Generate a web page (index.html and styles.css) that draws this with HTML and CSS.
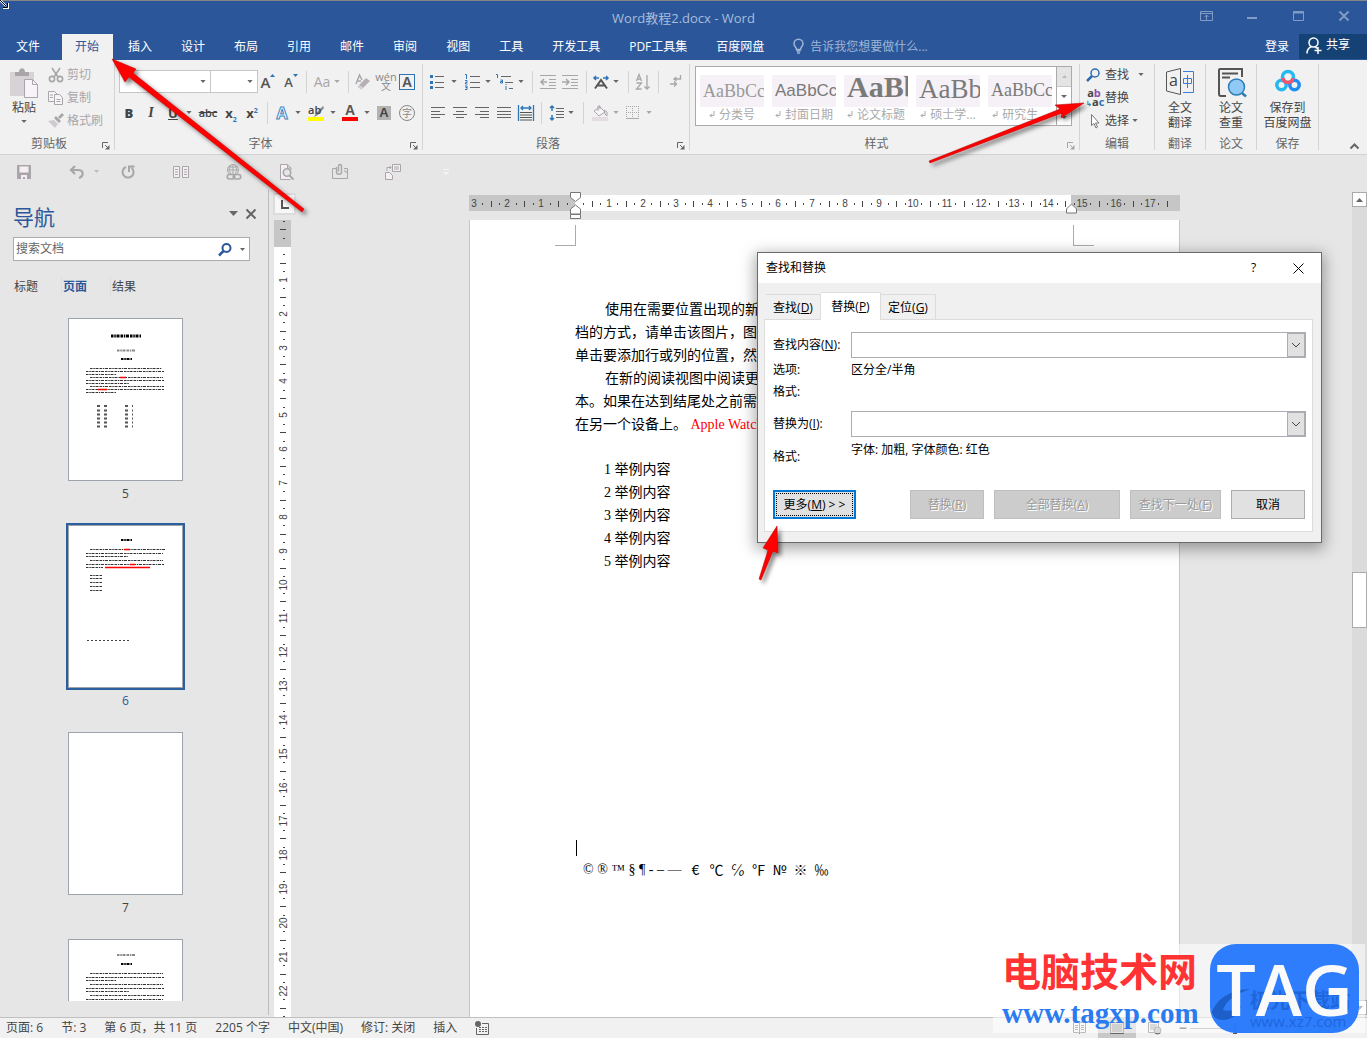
FILE: index.html
```html
<!DOCTYPE html>
<html lang="zh-CN">
<head>
<meta charset="utf-8">
<title>Word教程2.docx - Word</title>
<link rel="stylesheet" href="styles.css">
</head>
<body>
<svg class="defs" aria-hidden="true">
  <symbol id="down" viewBox="0 0 7 4"><path d="M0 0h7L3.500 4z" fill="currentColor"/></symbol>
  <symbol id="launch" viewBox="0 0 8 8"><path d="M.5 6V.5H6M3 3l3 3" fill="none" stroke="currentColor"/><path d="M7.500 3v4.500H3z" fill="currentColor"/></symbol>
  <symbol id="lines" viewBox="0 0 14 12"><path d="M0 1h14M0 4.500h14M0 7.500h14M0 11h14" stroke="currentColor"/></symbol>
  <symbol id="ret" viewBox="0 0 6 7"><path d="M5 0v4.500H1M3 2.500l-2 2 2 2" fill="none" stroke="#aaa"/></symbol>
</svg>

<header class="top">
  <div class="titlebar">
    <h1>Word教程2.docx - Word</h1>
    <div class="winbtns">
      <button aria-label="功能区显示选项"><svg width="13" height="10" fill="none" stroke="currentColor"><path d="M.5.5h12v9H.5zM.5 2.500h12M6.500 9V4M4.500 6l2-2 2 2"/></svg></button>
      <button aria-label="最小化"><svg width="10" height="10" stroke="currentColor"><path d="M0 7h10" stroke-width="2"/></svg></button>
      <button aria-label="最大化"><svg width="11" height="10" fill="none" stroke="currentColor"><path d="M.5.5h10v9H.5z"/><path d="M0 1.500h11" stroke-width="2"/></svg></button>
      <button aria-label="关闭"><svg width="10" height="10" stroke="currentColor"><path d="M.5.5l9 9M9.500.5l-9 9" stroke-width="2"/></svg></button>
    </div>
  </div>
  <nav class="tabs">
    <button class="file">文件</button><button class="on">开始</button><button>插入</button><button>设计</button><button>布局</button><button>引用</button><button>邮件</button><button>审阅</button><button>视图</button><button>工具</button><button>开发工具</button><button>PDF工具集</button><button>百度网盘</button>
    <button class="tell"><svg width="11" height="15" fill="none" stroke="currentColor" stroke-width="1.500"><path d="M3.500 10.500C3.500 8 1 7.500 1 4.800a4.300 4.300 0 0 1 9 0c0 2.700-2.500 3.200-2.500 5.700zM3.500 12h4M4 14h3"/></svg>告诉我您想要做什么...</button>
    <button class="login">登录</button>
    <button class="share"><svg width="16" height="17" fill="none" stroke="currentColor" stroke-width="1.500"><circle cx="7.500" cy="5.500" r="4.500"/><path d="M1 16.500c0-4 2-6 4.500-7M9 9.500l2 2M8.500 13.500h7M12 10v7"/></svg>共享</button>
  </nav>
</header>

<section class="ribbon" aria-label="功能区">
  <div class="group g-clip">
    <div class="body clip">
      <button class="paste">
        <svg width="29" height="30"><path d="M0 4h24v24H0z" fill="#d6d2d6"/><path d="M5 4h4c0-5 6-5 6 0h4v4H5z" fill="#a9a6a9"/><path d="M14.500 11.500h8l5 5v13h-13z" fill="#f8f3f8" stroke="#a9a6a9"/><path d="M22.500 11.500v5h5" fill="none" stroke="#a9a6a9"/></svg>
        <span>粘贴</span><svg class="ar"><use href="#down"/></svg>
      </button>
      <div class="stack dim">
        <button><svg width="16" height="16" fill="none" stroke="currentColor" stroke-width="1.600"><path d="M4 1l6 9M12 1L6 10"/><circle cx="4" cy="12" r="2.600"/><circle cx="12" cy="12" r="2.600"/></svg>剪切</button>
        <button><svg width="16" height="16" fill="#f8f3f8" stroke="currentColor"><path d="M.5 1.500h6l3 3v7h-9z"/><path d="M6.500 4.500h5l3 3v7h-8zM2 5h3M2 7.500h3M8.500 9.500h4M8.500 11.500h4"/></svg>复制</button>
        <button><svg width="16" height="16"><path d="M0 8l6-1 4 4-3 4z" fill="#cfcbcf"/><path d="M6 5l5 5 2-2-5-5zM10 4l4-4 2 2-4 4z" fill="currentColor"/></svg>格式刷</button>
      </div>
    </div>
    <div class="cap"><span>剪贴板</span><button class="la" aria-label="剪贴板选项"><svg><use href="#launch"/></svg></button></div>
  </div>

  <div class="group g-font">
    <div class="body">
      <div class="row font1">
        <div class="combo"><input aria-label="字体"><svg class="ar"><use href="#down"/></svg></div>
        <div class="combo size"><input aria-label="字号"><svg class="ar"><use href="#down"/></svg></div>
        <button class="g1" aria-label="增大字号">A<svg width="5" height="3"><path d="M0 3h5L2.500 0z" fill="#2e75b6"/></svg></button>
        <button class="g2" aria-label="减小字号">A<svg width="5" height="3"><path d="M0 0h5L2.500 3z" fill="#2e75b6"/></svg></button>
        <i class="sep"></i>
        <button class="aa dim">Aa<svg class="ar"><use href="#down"/></svg></button>
        <i class="sep"></i>
        <button class="dim" aria-label="清除格式"><svg width="16" height="16"><path d="M1 10L4.500 1 7 6M2.500 7H6" fill="none" stroke="currentColor" stroke-width="1.500"/><path d="M4 11l7-7 4 3-7 7z" fill="#b5b1b5"/><path d="M3 12l4 3" stroke="#ccc" stroke-width="2"/></svg></button>
        <button class="wen dim"><span>wén</span><span>文</span></button>
        <button class="abox">A</button>
      </div>
      <div class="row font2">
        <button><b>B</b></button><button class="it">I</button><button class="un">U</button><svg class="ar"><use href="#down"/></svg>
        <button class="st">abc</button><button class="sub">x<sub>2</sub></button><button class="sub">x<sup>2</sup></button>
        <i class="sep"></i>
        <button class="fx">A</button><svg class="ar"><use href="#down"/></svg>
        <button class="hl" aria-label="突出显示"><span>ab</span><svg width="16" height="16"><path d="M15 1L8 8l-2 4 4-2 6-7z" fill="#8a8a8a"/><path d="M0 12h16v4H0z" fill="#ff0"/></svg></button><svg class="ar"><use href="#down"/></svg>
        <button class="fc">A</button><svg class="ar"><use href="#down"/></svg>
        <button class="sh">A</button>
        <button class="circ dim">字</button>
      </div>
    </div>
    <div class="cap"><span>字体</span><button class="la" aria-label="字体选项"><svg><use href="#launch"/></svg></button></div>
  </div>

  <div class="group g-para">
    <div class="body">
      <div class="row para1">
        <button aria-label="项目符号"><svg width="14" height="15"><path d="M5 2.500h9M5 8.500h9M5 13.500h9" stroke="#666"/><path d="M0 1h3v3H0zM0 7h3v3H0zM0 12h3v3H0z" fill="#2e75b6"/></svg></button><svg class="ar"><use href="#down"/></svg>
        <button aria-label="编号"><svg width="15" height="16"><path d="M5 2.500h10M5 8.500h10M5 13.500h10" stroke="#666"/><path d="M0 .5h1.500V5M0 6.500h2v2H.5V10h2M0 12h2v3.500H0M.5 13.500H2" stroke="#2e75b6" fill="none"/></svg></button><svg class="ar"><use href="#down"/></svg>
        <button aria-label="多级列表"><svg width="18" height="16"><path d="M5 2.500h10M9 8.500h8M13 14.500h4" stroke="#666"/><path d="M0 .5h1.500V4M4.500 6h2v3h-2V7.500h2M10 10v1M10 12v4" stroke="#2e75b6" fill="none"/></svg></button><svg class="ar"><use href="#down"/></svg>
        <i class="sep"></i>
        <button class="dim" aria-label="减少缩进"><svg width="16" height="14" fill="none" stroke="currentColor"><path d="M0 .5h16M9 4.500h7M9 7.500h7M9 10.500h7M0 13.500h16"/><path d="M1 7h6M4 4L1 7l3 3" stroke-width="1.500"/></svg></button>
        <button class="dim" aria-label="增加缩进"><svg width="16" height="14" fill="none" stroke="currentColor"><path d="M0 .5h16M9 4.500h7M9 7.500h7M9 10.500h7M0 13.500h16"/><path d="M0 7h6M4 4l3 3-3 3" stroke-width="1.500"/></svg></button>
        <i class="sep"></i>
        <button aria-label="中文版式"><svg width="16" height="14" fill="none"><path d="M2 13.500L8 5l6 8.500M4.500 10.500h7" stroke="#555" stroke-width="2"/><path d="M1 3h5M3 1L1 3l2 2M15 3h-5M13 1l2 2-2 2" stroke="#2e75b6" stroke-width="1.500"/></svg></button><svg class="ar"><use href="#down"/></svg>
        <i class="sep"></i>
        <button class="dim" aria-label="排序"><svg width="14" height="16" fill="none" stroke="currentColor"><path d="M.5 7L3 .5 5.500 7M1.500 5h3M.5 9h5l-5 6h5" stroke-width="1.300"/><path d="M11 1v14M8.500 12.500L11 15l2.500-2.500" stroke-width="1.300"/></svg></button>
        <i class="sep"></i>
        <button class="dim" aria-label="显示编辑标记"><svg width="12" height="13" fill="none" stroke="currentColor" stroke-width="1.300"><path d="M10.500 0v4H4M6.500 2L4 4l2.500 2M0 9h6M4 6.500L6.500 9 4 11.500"/></svg></button>
      </div>
      <div class="row para2">
        <button aria-label="左对齐"><svg width="14" height="12" stroke="#666"><path d="M0 .5h14M0 4.500h9M0 7.500h14M0 10.500h9"/></svg></button>
        <button aria-label="居中"><svg width="14" height="12" stroke="#666"><path d="M0 .5h14M3 4.500h8M0 7.500h14M3 10.500h8"/></svg></button>
        <button aria-label="右对齐"><svg width="14" height="12" stroke="#666"><path d="M0 .5h14M5 4.500h9M0 7.500h14M5 10.500h9"/></svg></button>
        <button aria-label="两端对齐"><svg width="14" height="12" stroke="#666"><path d="M0 .5h14M0 4.500h14M0 7.500h14M0 10.500h14"/></svg></button>
        <button aria-label="分散对齐"><svg width="16" height="16" fill="none"><path d="M.5 0v16M15.500 0v16M3 3h10M5 1L3 3l2 2M11 1l2 2-2 2" stroke="#2e75b6" stroke-width="1.300"/><path d="M2 7.500h12M2 10h12M2 12.500h12M2 15h12" stroke="#555"/></svg></button>
        <i class="sep"></i>
        <button aria-label="行距"><svg width="15" height="16" fill="none"><path d="M3 1v5M1 3l2-2 2 2M3 10v5M1 13l2 2 2-2" stroke="#2e75b6" stroke-width="1.500"/><path d="M7 3.500h8M7 6.500h8M7 9.500h8M7 12.500h8" stroke="#666"/></svg></button><svg class="ar"><use href="#down"/></svg>
        <i class="sep"></i>
        <button class="dim" aria-label="底纹"><svg width="16" height="16"><path d="M2 6l6-4 5 5-6 4z" fill="#f8f3f8" stroke="currentColor"/><path d="M6 6V1h2v3M12 5l3 2v4l-2-2z" fill="none" stroke="currentColor"/><path d="M0 12h16v4H0z" fill="#e3dde3"/></svg></button><svg class="ar dim"><use href="#down"/></svg>
        <button class="dim" aria-label="边框"><svg width="13" height="13" fill="none" stroke="currentColor"><path d="M.5 0v11M6.500 0v11M12.500 0v11M0 .5h13M0 6.500h13" stroke-dasharray="1 1"/><path d="M0 12.500h13"/></svg></button><svg class="ar dim"><use href="#down"/></svg>
      </div>
    </div>
    <div class="cap"><span>段落</span><button class="la" aria-label="段落选项"><svg><use href="#launch"/></svg></button></div>
  </div>

  <div class="group g-style">
    <div class="body">
      <div class="gallery">
        <div class="items">
          <button><span class="sw s1">AaBbCc</span><span class="nm"><svg width="6" height="7"><use href="#ret"/></svg>分类号</span></button>
          <button><span class="sw s2">AaBbCc</span><span class="nm"><svg width="6" height="7"><use href="#ret"/></svg>封面日期</span></button>
          <button><span class="sw s3">AaBb</span><span class="nm"><svg width="6" height="7"><use href="#ret"/></svg>论文标题</span></button>
          <button><span class="sw s4">AaBb</span><span class="nm"><svg width="6" height="7"><use href="#ret"/></svg>硕士学...</span></button>
          <button><span class="sw s5">AaBbCc</span><span class="nm"><svg width="6" height="7"><use href="#ret"/></svg>研究生...</span></button>
        </div>
        <div class="gs"><button class="off" aria-label="上一行"><svg width="5" height="3"><path d="M0 3h5L2.500 0z" fill="#bbb"/></svg></button><button aria-label="下一行"><svg width="6" height="3"><path d="M0 0h6L3 3z" fill="#666"/></svg></button><button aria-label="其他"><svg width="6" height="6"><path d="M0 .5h6" stroke="#666"/><path d="M0 3h6L3 6z" fill="#666"/></svg></button></div>
      </div>
    </div>
    <div class="cap"><span>样式</span><button class="la dim" aria-label="样式选项"><svg><use href="#launch"/></svg></button></div>
  </div>

  <div class="group g-edit">
    <div class="body stack">
      <button><svg width="16" height="14" fill="none" stroke="#2e6cb0"><circle cx="9" cy="5" r="4" stroke-width="1.500"/><path d="M6 8l-5 5" stroke-width="2.500"/></svg>查找<svg class="ar wide"><use href="#down"/></svg></button>
      <button><span class="rep"><span>a<em>b</em></span><span><u>↳</u>a<s>c</s></span></span>替换</button>
      <button><svg width="16" height="16"><path d="M5.500 1.500v11l2.500-2 2 4.500 1.500-1-2-4h3.500z" fill="#fff" stroke="#777"/></svg>选择<svg class="ar"><use href="#down"/></svg></button>
    </div>
    <div class="cap"><span>编辑</span></div>
  </div>
  <div class="group g-one">
    <div class="body"><button class="big"><svg width="29" height="30" fill="none"><path d="M.5 5L14.500 1.500v26L.5 24z" stroke="#555"/><path d="M17 4.500h10.500v21H17" stroke="#3b7dd8"/><path d="M17.500 11.500h8v5h-8zM21.500 8v13" stroke="#3b7dd8"/><text x="3" y="19" class="ia">a</text></svg><span>全文<br>翻译</span></button></div>
    <div class="cap"><span>翻译</span></div>
  </div>
  <div class="group g-one">
    <div class="body"><button class="big"><svg width="29" height="30" fill="none"><path d="M25 10V2H3a1 1 0 0 0-1 1v24a2 2 0 0 0 2 2h5" stroke="#555" stroke-width="2"/><path d="M5 6.500h16M5 10.500h8" stroke="#555" stroke-width="2"/><circle cx="19.500" cy="20" r="8" fill="#90c8f6" stroke="#2c7db5" stroke-width="1.500"/><path d="M25 26l4 3.500" stroke="#2c7db5" stroke-width="2.500"/></svg><span>论文<br>查重</span></button></div>
    <div class="cap"><span>论文</span></div>
  </div>
  <div class="group g-save">
    <div class="body"><button class="big"><svg width="26" height="30" fill="none" stroke-width="3.500"><circle cx="13" cy="10" r="5.500" stroke="#25b9f0"/><circle cx="6.500" cy="18" r="4.700" stroke="#25b9f0"/><circle cx="19.500" cy="18" r="4.700" stroke="#1f8df5"/><path d="M8 11c1 6 9 6 10 0" stroke="#f0566e"/></svg><span>保存到<br>百度网盘</span></button></div>
    <div class="cap"><span>保存</span></div>
  </div>
  <button class="collapse" aria-label="折叠功能区"><svg width="9" height="6" fill="none" stroke="#666" stroke-width="2"><path d="M.5 5.500l4-4 4 4"/></svg></button>
</section>

<div class="qat">
  <button aria-label="保存"><svg width="14" height="14"><path d="M0 0h14v14H0z" fill="#a9a6a9"/><path d="M2.500 1.500h9v6h-9zM4 10h6v4H8v-2H6v2H4z" fill="#f5eff5"/></svg></button>
  <button class="undo" aria-label="撤消"><svg width="15" height="14" fill="none" stroke="currentColor" stroke-width="2.200"><path d="M6 1L2 5l4 4M2 5h7c6 0 6 6 1 8"/></svg><svg class="ar"><use href="#down"/></svg></button>
  <button aria-label="重复"><svg width="14" height="14" fill="none" stroke="currentColor" stroke-width="2"><path d="M5 2a5.500 5.500 0 1 0 5.500.8M8 7V1.500h5.500"/></svg></button>
  <button aria-label="双页"><svg width="16" height="12" fill="#f5eff5" stroke="currentColor"><path d="M.5.5h6v11h-6zM9.500.5h6v11h-6zM2 3.500h3M2 6h3M2 8.500h3M11 3.500h3M11 6h3M11 8.500h3"/></svg></button>
  <button aria-label="超链接"><svg width="16" height="16" fill="none" stroke="currentColor"><circle cx="7" cy="6" r="5.500"/><path d="M1.500 6h11M2 3h10M7 .5v10M5 1c-2 4-2 6 0 9M9 1c2 4 2 6 0 9"/><path d="M3.500 10.500h3a2 2 0 0 1 0 4.500h-3a2 2 0 0 1 0-4.500zM9.500 10.500h3a2 2 0 0 1 0 4.500h-3a2 2 0 0 1 0-4.500z" fill="#e6e6e6" stroke-width="1.600"/></svg></button>
  <button aria-label="打印预览"><svg width="14" height="16" fill="none" stroke="currentColor"><path d="M10.500 15.500H.5V.5h7l3.500 3.500v2M7.500.5V4H11" fill="#f5eff5"/><circle cx="7" cy="8.500" r="3.700" fill="#e6e6e6" stroke-width="1.600"/><path d="M9.500 11.500l4 4" stroke-width="2"/></svg></button>
  <button aria-label="邮件附件"><svg width="16" height="15" fill="none" stroke="currentColor"><path d="M4 4.500H.5v10h15v-10H12M12 7h2v2"/><path d="M4.500 3v5c0 3 5 3 5 0V2c0-2-3-2-3 0v5.500" stroke-width="1.400"/></svg></button>
  <button aria-label="切换窗口"><svg width="16" height="16" fill="#f5eff5" stroke="currentColor"><path d="M7.500.5h8v7h-8zM.5 8.500h4l3 3v4h-7zM9 3h5M9 5h5M2 7V3.500h4M4.500 2L6 3.500 4.500 5"/></svg></button>
  <button class="more" aria-label="自定义"><svg width="6" height="6"><path d="M0 .5h6" stroke="#f6f6f6"/><path d="M0 3h6L3 6z" fill="#f6f6f6"/></svg></button>
</div>

<main class="work">
  <aside class="navpane">
    <div class="navhead"><h2>导航</h2><button aria-label="任务窗格选项"><svg width="9" height="5"><path d="M0 0h9L4.500 5z" fill="#666"/></svg></button><button aria-label="关闭"><svg width="10" height="10" stroke="#666" stroke-width="2"><path d="M.5.5l9 9M9.500.5l-9 9"/></svg></button></div>
    <div class="search"><input aria-label="搜索文档" placeholder="搜索文档"><svg width="14" height="13" fill="none" stroke="#2b579a"><circle cx="8.500" cy="5" r="4" stroke-width="2"/><path d="M5.500 8L1 12.500" stroke-width="2.500"/></svg><svg class="ar"><use href="#down"/></svg></div>
    <div class="navtabs"><button>标题</button><button class="on">页面</button><button>结果</button></div>
    <ol class="thumbs">
      <li><svg class="th" viewBox="0 0 113 161"><g stroke="#333" stroke-dasharray="2.500 .8 1.500 .7 3 1"><path d="M42 17h30" stroke="#000" stroke-width="3"/><path d="M48 31.500h18" stroke="#888" stroke-width="2"/><path d="M52 40h11" stroke="#000" stroke-width="2"/><path d="M21 49.500h72M17 52.500h78M17 55.500h30M21 58.500h73M17 61.500h78M17 64.500h43M21 67.500h74M17 70.500h78M17 73.500h30"/></g><path d="M51 58.500h6M29 70.500h9" stroke="red" stroke-width="1.500"/><path d="M28 87h12M56 87h8M28 91.500h12M56 91.500h8M28 95.500h12M56 95.500h8M28 99.500h12M56 99.500h8M28 103.500h12M56 103.500h8M28 107.500h12M56 107.500h8" stroke="#555" stroke-width="2" stroke-dasharray="3 4"/></svg><span>5</span></li>
      <li class="on"><svg class="th" viewBox="0 0 113 161"><g stroke="#333" stroke-dasharray="2.500 .8 1.500 .7 3 1"><path d="M52 14h11" stroke="#000" stroke-width="2"/><path d="M21 23.500h75M17 27.500h77M17 30.500h42M21 34.500h73M17 38.500h78M17 41.500h17"/><path d="M21 49.500h12M21 52.500h12M21 56.500h12M21 60.500h12M21 64.500h12"/></g><path d="M18 114.500h42" stroke="#444" stroke-dasharray="2 2"/><path d="M55 23.500h6M61 38.500h5M36 41.500h45" stroke="red" stroke-width="1.500"/></svg><span>6</span></li>
      <li><svg class="th" viewBox="0 0 113 161"></svg><span>7</span></li>
      <li><svg class="th" viewBox="0 0 113 161"><g stroke="#333" stroke-dasharray="2.500 .8 1.500 .7 3 1"><path d="M48 15h18" stroke="#888" stroke-width="2"/><path d="M52 24h11" stroke="#000" stroke-width="2"/><path d="M21 33.500h73M17 37.500h78M17 40.500h30M21 44.500h73M17 48.500h78M17 51.500h43M21 55.500h74M17 59.500h77M17 62.500h60"/></g></svg></li>
    </ol>
  </aside>

  <div class="vcol">
    <button class="tabstop" aria-label="制表符"><svg width="8" height="9" fill="none" stroke="#555" stroke-width="2"><path d="M1 0v8h7"/></svg></button>
    <svg class="vruler" id="vruler"></svg>
  </div>

  <div class="doc">
    <svg class="hruler" id="hruler" width="711" height="28"></svg>
    <article class="page">
      <div class="marks"><i></i><i></i></div>
      <h3>1.1 标题XXXX</h3>
      <p>使用在需要位置出现的新按钮在 Word 中保存时间</p>
      <p class="cont">档的方式，请单击该图片，图片旁边将会显示布局选项按钮。<br>单击要添加行或列的位置，然后单击加号。</p>
      <p>在新的阅读视图中阅读更加容易。可以折叠文档某些部分</p>
      <p class="cont">本。如果在达到结尾处之前需要停止读取，Word 会记住<br>在另一个设备上。 <span class="red">Apple Watch Apple Watch</span></p>
      <ol class="list"><li>1 举例内容</li><li>2 举例内容</li><li>3 举例内容</li><li>4 举例内容</li><li>5 举例内容</li></ol>
      <div class="caret"></div>
      <div class="syms"><span class="run">© ® ™ § ¶ - – —</span><span>€</span><span>℃</span><span>℅</span><span>℉</span><span>№</span><span>※</span><span>‰</span></div>
    </article>
  </div>

  <div class="vscroll"><button aria-label="向上滚动"><svg width="7" height="4"><path d="M0 4h7L3.500 0z" fill="#666"/></svg></button><div class="handle"></div><button aria-label="向下滚动"><svg width="7" height="4"><path d="M0 0h7L3.500 4z" fill="#666"/></svg></button></div>
</main>

<footer class="status">
  <span>页面: 6</span><span>节: 3</span><span>第 6 页，共 11 页</span><span>2205 个字</span><span>中文(中国)</span><span>修订: 关闭</span><span>插入</span>
  <svg width="14" height="14"><circle cx="3" cy="3" r="3" fill="#666"/><path d="M7 2.500h6.500v11h-12V7" fill="none" stroke="#666"/><path d="M4 6.500h8M4 8.500h8M4 10.500h8" fill="none" stroke="#666" stroke-dasharray="2 1"/></svg>
  <div class="right">
    <div class="views">
      <button aria-label="阅读视图"><svg width="13" height="12" fill="none" stroke="#666"><path d="M.5.5h5l1 1 1-1h5v10h-5l-1 1-1-1h-5zM6.500 1v10M2 3.500h3M2 5.500h3M2 7.500h3M8 3.500h3M8 5.500h3M8 7.500h3"/></svg></button>
      <button class="on" aria-label="页面视图"><svg width="14" height="12" fill="none" stroke="#666"><path d="M.5.5h13v11H.5zM2 3h10M2 5h10M2 7h10M2 9h10"/></svg></button>
      <button aria-label="Web 版式"><svg width="14" height="13" fill="none" stroke="#666"><path d="M6 10.500H.5V.5h10V5M2 3h7M2 5h6M2 7h4"/><circle cx="9.500" cy="8.500" r="3.500" fill="#aaa"/></svg></button>
    </div>
    <div class="zoom"><button aria-label="缩小">−</button><input type="range" aria-label="显示比例" min="10" max="170" value="80"><button aria-label="放大">+</button><span>90%</span></div>
  </div>
</footer>

<div class="dialog" role="dialog" aria-label="查找和替换">
  <div class="dtitle"><span>查找和替换</span><button aria-label="帮助">?</button><button aria-label="关闭"><svg width="11" height="11" stroke="#000"><path d="M.5.5l10 10M10.500.5l-10 10"/></svg></button></div>
  <div class="dbody">
    <div class="dtabs"><button>查找(<u>D</u>)</button><button class="on">替换(<u>P</u>)</button><button>定位(<u>G</u>)</button></div>
    <div class="panel">
      <div class="form">
        <label for="find">查找内容(<u>N</u>):</label>
        <div class="drop"><input id="find"><button aria-label="展开查找内容"><svg width="10" height="6" fill="none" stroke="#444"><path d="M1 1l4 4 4-4"/></svg></button></div>
        <span class="r24">选项:</span><span class="r24">区分全/半角</span>
        <span class="r20">格式:</span><span></span>
        <label class="second" for="repl">替换为(<u>I</u>):</label>
        <div class="drop second"><input id="repl"><button aria-label="展开替换为"><svg width="10" height="6" fill="none" stroke="#444"><path d="M1 1l4 4 4-4"/></svg></button></div>
        <span class="r40">格式:</span><span class="r26">字体: 加粗, 字体颜色: 红色</span>
      </div>
      <div class="btns">
        <button class="def"><span>更多(<u>M</u>) &gt; &gt;</span></button>
        <button class="w74" disabled>替换(<u>R</u>)</button>
        <button class="w126" disabled>全部替换(<u>A</u>)</button>
        <button class="w91" disabled>查找下一处(<u>F</u>)</button>
        <button class="w74">取消</button>
      </div>
    </div>
  </div>
</div>

<div class="mark">
  <div class="site"><strong>电脑技术网</strong><a href="#">www.tagxp.com</a></div>
  <div class="tag"><div class="under"><svg width="40" height="38"><path d="M2 24C8 8 24 2 40 1 26 6 16 12 13 22c6 2 14 0 18-4-2 14-26 20-29 6z" fill="#1d5fc9"/></svg><div><b>极光下载站</b><span>www.xz7.com</span></div></div><span class="t">TAG</span></div>
</div>

<svg class="arrows" width="1100" height="600" aria-hidden="true">
  <defs><filter id="sh" x="-10%" y="-10%" width="130%" height="130%"><feDropShadow dx="3" dy="3" stdDeviation="2" flood-opacity=".5"/></filter></defs>
  <g fill="#f00" stroke="#b00000" stroke-width=".5" filter="url(#sh)">
    <path d="M112 59l24 10-3 4 171 136-2 3-173-135-4 5z"/>
    <path d="M1084 103l-23 15 1-5-132 50-1-2 131-52-5-4z"/>
    <path d="M777 526l1 27-5-2-12 29-2-1 9-29-5-2z"/>
  </g>
  <path d="M0 0l6 6M8 3v5H3" fill="none" stroke="#fff" stroke-width="2"/><path d="M0 0l6 6M7.500 3v4.500H3" fill="none" stroke="#000"/>
</svg>
<script src="ruler.js"></script>
</body>
</html>
```
FILE: styles.css
```css
* { box-sizing: border-box; }
body {
  margin: 0; height: 100vh; display: flex; flex-direction: column; overflow: hidden; position: relative;
  font: 12px/16px "Open Sans", "Noto Sans CJK SC", sans-serif; color: #444; background: #e6e6e6;
}
button { border: 0; padding: 0; background: none; font: inherit; color: inherit; white-space: nowrap; }
input { border: 0; padding: 0; margin: 0; background: none; font: inherit; min-width: 0; outline: 0; }
svg { display: block; flex: none; overflow: visible; }
.defs { width: 0; height: 0; position: absolute; }
.ar { width: 6px; height: 3px; color: #666; }
.dim, .dim .ar { color: #a9a6a9; }

.top { background: #2b579a; border-top: 1px solid #858585; color: #fff; flex: none; }
.titlebar { height: 33px; display: flex; align-items: center; position: relative; color: #a9bddb; }
.titlebar h1 { flex: 1; margin: 0; text-align: center; font-size: 13px; font-weight: 400; line-height: 16px; }
.winbtns { position: absolute; right: 0; top: 7px; display: flex; color: #7f9bc6; }
.winbtns button { width: 46px; height: 16px; display: grid; place-items: center; }
.tabs { display: flex; height: 26px; gap: 2px; }
.tabs button { padding: 0 14px 1px 13px; }
.tabs .file { padding: 0 20px 1px 16px; }
.tabs .on { background: #f1f1f1; color: #2b579a; }
.tabs .tell { display: flex; align-items: center; gap: 6px; color: #9fb5d6; }
.tabs .login { margin-left: auto; padding: 0 8px 1px; }
.tabs .share { background: #154274; width: 68px; height: 25px; padding: 0 0 3px 7px; display: flex; align-items: center; gap: 4px; }

.ribbon { height: 95px; background: #f1f1f1; border-bottom: 1px solid #d2d2d2; display: flex; flex: none; padding-top: 4px; }
.group { height: 86px; border-right: 1px solid #d4d4d4; display: flex; flex-direction: column; }
.body { flex: 1; }
.cap { height: 16px; margin-bottom: -2px; display: flex; color: #666; flex: none; }
.cap span { flex: 1; text-align: center; }
.la { width: 16px; display: grid; place-items: end center; }
.la svg { width: 8px; height: 8px; margin-bottom: 2px; }
.g-clip { width: 115px; }
.g-font { width: 308px; }
.g-para { width: 267px; }
.g-style { width: 390px; }
.g-edit { width: 75px; }
.g-one { width: 51px; }
.g-save { width: 62px; }
.clip { display: flex; gap: 6px; padding: 4px 0 0 6px; }
.paste { width: 36px; display: flex; flex-direction: column; align-items: center; }
.paste span { line-height: 20px; }
.paste .ar { margin-top: 2px; }
.stack button { display: flex; align-items: center; height: 23px; gap: 3px; }
.clip .stack { margin-top: -5px; }
.body.stack { padding: 0 0 0 6px; margin-top: -1px; }
.stack .wide { margin-left: 6px; }
.rep { width: 16px; display: flex; flex-direction: column; font: bold 11px/9px "Open Sans", sans-serif; }
.rep em { color: #8a4fa8; font-style: normal; }
.rep s, .rep u { color: #2e75b6; text-decoration: none; }
.rep u { font-size: 7px; }
.ia { font: 16px "Open Sans", sans-serif; fill: #444; }
.big { width: 100%; display: flex; flex-direction: column; align-items: center; padding-top: 3px; line-height: 15px; gap: 3px; }
.collapse { margin: auto 8px 0 auto; height: 16px; display: grid; place-items: center; }

.row { display: grid; align-items: center; justify-items: center; height: 31px; padding-left: 4px; }
.row:first-child { margin-top: 2px; }
.font1 { grid-template-columns: 92px 46px 22px 24px 6px 36px 6px 24px 22px 20px; }
.font2 { grid-template-columns: 20px 24px 20px 12px 26px 20px 22px 8px 22px 10px 26px 8px 26px 8px 26px 20px; }
.para1 { grid-template-columns: 20px 14px 22px 10px 24px 8px 14px 18px 26px 6px 24px 6px 18px 12px 18px 18px; }
.para2 { grid-template-columns: repeat(5, 22px) 8px 22px 8px 16px 18px 14px 18px 16px; }
.sep { width: 1px; height: 22px; background: #d4d4d4; }
.combo { width: 92px; height: 23px; background: #fff; border: 1px solid #c6c6c6; display: flex; align-items: center; padding-right: 4px; }
.combo input { flex: 1; }
.combo.size { width: 47px; border-left: 0; }
.g1, .g2 { display: flex; font: 600 15px/20px "Open Sans"; color: #555; }
.g2 { font-size: 13px; }
.g1 svg, .g2 svg { margin-top: 2px; }
.aa { display: flex; align-items: center; gap: 4px; font-size: 14px; }
.wen { display: flex; flex-direction: column; align-items: center; font-size: 11px; line-height: 8px; color: #888; }
.wen span + span { font-size: 10px; line-height: 10px; }
.abox { width: 16px; height: 16px; border: 1px solid #2e75b6; font: bold 14px/14px "Liberation Sans"; color: #555; }
.font2 { font: bold 13px/16px "Open Sans"; color: #444; }
.it { font: italic bold 14px "Liberation Serif"; }
.un { text-decoration: underline; }
.st { font-size: 11px; font-weight: 600; text-decoration: line-through; }
.sub { line-height: 16px; }
.sub sub, .sub sup { font-size: 7px; color: #2e75b6; line-height: 0; }
.fx { font: bold 16px "Open Sans"; color: #fff; -webkit-text-stroke: 1px #3f84c4; }
.hl { width: 16px; height: 16px; position: relative; font: 600 11px/10px "Open Sans"; }
.hl span { position: absolute; left: 0; top: 0; }
.fc { width: 16px; font: bold 14px/13px "Liberation Sans"; border-bottom: 4px solid red; color: #555; }
.sh { width: 14px; height: 14px; background: #b3b3b3; font: bold 13px/14px "Liberation Sans"; color: #444; }
.circ { width: 16px; height: 16px; border: 1px solid; border-radius: 50%; font: 10px/13px "Noto Sans CJK SC"; color: #888; }

.gallery { margin: 2px 0 0 5px; width: 377px; height: 60px; border: 1px solid #ababab; background: #fff; display: flex; padding-left: 4px; }
.items { display: flex; gap: 8px; padding-top: 4px; }
.items button { width: 64px; }
.sw { display: block; height: 32px; line-height: 32px; background: #f6f1f6; overflow: hidden; color: #7a7a7a; text-align: left; padding-left: 3px; }
.s1 { font-family: "Liberation Serif"; font-size: 18px; color: #999; }
.s2 { font-family: "Liberation Sans"; font-size: 17px; }
.s3 { font-family: "Liberation Serif"; font-weight: 700; font-size: 30px; line-height: 24px; }
.s4 { font-family: "Liberation Serif"; font-size: 27px; line-height: 28px; }
.s5 { font-family: "Liberation Serif"; font-size: 18px; line-height: 30px; }
.nm { display: flex; align-items: center; justify-content: center; gap: 4px; color: #aaa; line-height: 15px; }
.gs { width: 15px; margin-left: auto; border-left: 1px solid #ababab; display: flex; flex-direction: column; }
.gs button { flex: 1; display: grid; place-items: center; border-bottom: 1px solid #c8c8c8; }
.gs button:last-child { border: 0; }
.gs .off { background: #e4e4e4; }

.qat { height: 35px; flex: none; display: flex; align-items: center; padding: 0 0 2px 16px; gap: 37px; color: #a9a6a9; }
.qat button { width: 16px; display: flex; justify-content: center; }
.qat .undo { width: 14px; gap: 10px; justify-content: flex-start; }
.qat .undo .ar { width: 5px; height: 3px; margin-top: 5px; color: #bbb; }

.work { flex: 1; min-height: 0; display: flex; overflow: hidden; }
.navpane { width: 269px; border-right: 1px solid #bcbcbc; display: flex; flex-direction: column; padding-left: 13px; margin-bottom: 2px; }
.navhead { display: flex; align-items: center; height: 47px; padding: 0 12px 0 0; gap: 8px; }
.navhead h2 { margin: 0; padding-top: 4px; flex: 1; font: 21px/28px "Noto Sans CJK SC"; color: #2b579a; }
.search { width: 237px; height: 24px; border: 1px solid #ababab; background: #fff; display: flex; align-items: center; gap: 8px; padding: 0 4px 0 2px; flex: none; }
.search input { flex: 1; }
.search input::placeholder { color: #666; opacity: 1; }
.search svg + .ar { width: 5px; height: 3px; }
.navtabs { display: flex; height: 20px; margin-top: 16px; flex: none; }
.navtabs button { width: 49px; text-align: left; border-right: 1px solid #dedede; padding-left: 1px; }
.navtabs button:last-child { border: 0; }
.navtabs .on { color: #2b579a; font-weight: 700; }
.thumbs { list-style: none; margin: 21px 0 14px; padding: 0 0 0 55px; flex: 1; min-height: 0; overflow: clip; }
.thumbs li { width: 115px; height: 207px; text-align: center; }
.th { width: 115px; height: 163px; background: #fff; border: 1px solid #9da3ab; margin-bottom: 5px; }
.on .th { outline: 2px solid #2b5f9e; }
.thumbs .on { color: #2b579a; }

.vcol { width: 28px; padding-left: 4px; display: flex; flex-direction: column; }
.tabstop { width: 23px; height: 22px; border: 2px solid #dcdcdc; background: #f8f8f8; display: grid; place-items: center; margin: 3px 0 5px; flex: none; }
.vruler { width: 17px; flex: 1; min-height: 0; background: #fff; margin-left: 1px; overflow: hidden; }
.doc { flex: 1; display: flex; flex-direction: column; align-items: center; min-width: 0; overflow: hidden; padding-top: 2px; }
.hruler text, .vruler text { font: 10px "Liberation Sans"; fill: #444; text-anchor: middle; }
.page { width: 711px; flex: 1 0 auto; background: #fff; border: 1px solid #c6c6c6; border-width: 0 1px; padding: 5px 85px 0; font: 14px/23px "Liberation Serif", "Noto Sans CJK SC", serif; color: #000; white-space: nowrap; }
.marks { display: flex; justify-content: space-between; }
.marks i { width: 21px; height: 21px; border: solid #ababab; border-width: 0 1px 1px 0; }
.marks i + i { border-width: 0 0 1px 1px; }
.page h3 { margin: 2px 0 27px; font-size: 14px; text-align: center; }
.page p { margin: 0 0 0 20px; text-indent: 30px; }
.page .cont { text-indent: 0; }
.red { color: red; }
.list { list-style: none; margin: 22px 0 267px 49px; padding: 0; }
.caret { width: 1px; height: 16px; margin: 4px 0 0 21px; background: #000; }
.syms { display: flex; gap: 7px; margin: 2px 0 0 28px; }
.syms span { width: 14px; text-align: center; font-family: "Noto Sans CJK SC"; }
.syms .run { width: auto; font-family: inherit; }

.vscroll { width: 15px; background: #dbdbdb; display: flex; flex-direction: column; margin: 2px 0; }
.vscroll button { height: 15px; border: 1px solid #ababab; background: #fff; display: grid; place-items: center; }
.handle { height: 56px; margin: 365px 0 auto; border: 1px solid #ababab; background: #fff; }

.status { height: 21px; flex: none; background: #f1f1f1; border-top: 1px solid #c0c0c0; display: flex; align-items: center; gap: 18px; padding: 0 27px 0 6px; }
.right { margin-left: auto; display: flex; gap: 4px; }
.views { display: flex; height: 20px; }
.views button { width: 38px; display: grid; place-items: center; }
.views .on { background: #c8c8c8; }
.zoom { display: flex; align-items: center; gap: 3px; }
.zoom span { padding-left: 10px; }
.zoom button { font-weight: 700; font-size: 14px; width: 9px; }
.zoom input { width: 101px; height: 16px; appearance: none; background: linear-gradient(#999, #999) center / 100% 1px no-repeat; }
.zoom input::-webkit-slider-thumb { appearance: none; width: 4px; height: 11px; background: #555; }

.dialog { position: absolute; left: 757px; top: 252px; width: 565px; border: 1px solid #6b6b6b; background: #f0f0f0; color: #000; box-shadow: 0 4px 14px 2px rgba(0, 0, 0, .35); }
.dtitle { height: 30px; background: #fff; display: flex; align-items: center; padding-left: 8px; }
.dtitle span { flex: 1; }
.dtitle button { width: 45px; display: grid; place-items: center; }
.dbody { padding: 9px 8px 10px 6px; }
.dtabs { display: flex; align-items: flex-end; padding-left: 2px; height: 27px; }
.dtabs button { height: 25px; border: 1px solid #dcdcdc; border-width: 1px 1px 0 0; width: 55px; padding-top: 1px; }
.dtabs .on { height: 28px; width: 60px; background: #fff; margin-bottom: -1px; position: relative; padding-bottom: 1px; }
.panel { border: 1px solid #dcdcdc; background: #fff; padding: 12px 6px 12px 8px; }
.form { display: grid; grid-template-columns: 78px 1fr; }
.form label { line-height: 26px; }
.form .second { margin-top: 9px; }
.r24 { line-height: 24px; }
.r26 { line-height: 26px; }
.r20 { line-height: 20px; }
.r40 { line-height: 40px; }
.drop { height: 26px; border: 1px solid #abadb3; display: flex; }
.drop input { flex: 1; }
.drop button { width: 18px; border: 1px solid #abadb3; background: #e1e1e1; display: grid; place-items: center; }
.btns { display: flex; gap: 10px; margin-top: 13px; padding-right: 1px; }
.btns button { height: 29px; border: 1px solid #adadad; background: #e1e1e1; }
.btns button:disabled { background: #ccc; border-color: #bfbfbf; color: #9a9a9a; text-shadow: 1px 1px #fff; }
.btns .def { width: 83px; border: 2px solid #0078d7; padding: 1px; margin-right: auto; }
.btns .def span { display: block; border: 1px dotted #000; line-height: 21px; }
.btns .w74 { width: 74px; }
.btns .w126 { width: 126px; }
.btns .w91 { width: 91px; }

.mark { position: absolute; right: 2px; bottom: 5px; width: 372px; height: 89px; background: rgba(255, 255, 255, .55); display: flex; justify-content: space-between; padding: 0 6px 0 9px; }
.site { display: flex; flex-direction: column; color: #f33; }
.site strong { font: bold 39px/50px "Noto Sans CJK SC"; }
.site a { font: bold 29px/38px "Liberation Serif"; color: #2b7bf0; text-decoration: none; }
.tag { width: 149px; height: 89px; border-radius: 26px; background: rgba(36, 120, 252, .96); position: relative; overflow: hidden; display: grid; place-items: center; }
.tag .t { position: relative; font: 600 70px/84px "Open Sans"; color: #fafafa; }
.under { position: absolute; left: 0; top: 44px; display: flex; color: #1f66dd; }
.under b { display: block; font: bold 20px/24px "Noto Sans CJK SC"; white-space: nowrap; }
.under span { font: 15px/18px "Open Sans"; }
.arrows { position: absolute; left: 0; top: 0; pointer-events: none; }
```
FILE: ruler.js
```js
const NS = "http://www.w3.org/2000/svg";
function add(svg, name, attrs, text) {
  const el = document.createElementNS(NS, name);
  for (const key in attrs) el.setAttribute(key, attrs[key]);
  if (text !== undefined) el.textContent = text;
  svg.appendChild(el);
}

// Horizontal ruler: the zero mark sits at the left margin of the page
const h = document.getElementById("hruler");
const pitch = 33.8, zero = 106;
add(h, "rect", { x: 0, y: 3, width: 711, height: 16, fill: "#c6c6c6" });
add(h, "rect", { x: zero, y: 3, width: 496, height: 16, fill: "#fff" });
for (let q = -12; q <= 70; q++) {
  const x = Math.round(zero + q * pitch / 4);
  if (x < 2 || x > 709 || q === 0) continue;
  if (q % 4 === 0) add(h, "text", { x: x, y: 15 }, Math.abs(q / 4));
  else if (q % 2 === 0) add(h, "rect", { x: x, y: 9, width: 1, height: 6, fill: "#444" });
  else add(h, "rect", { x: x, y: 11, width: 1, height: 2, fill: "#444" });
}
const mk = { fill: "#fff", stroke: "#777" };
add(h, "path", { d: "M101.5.5h10v5l-5 4-5-4zM106.500 13l5 4v5h-10v-5zM101.500 22.500h10v4h-10z", ...mk });
add(h, "path", { d: "M602.500 12l5 5v4h-10v-4z", ...mk });

// Vertical ruler: the top margin is grey
const v = document.getElementById("vruler");
add(v, "rect", { x: 0, y: 0, width: 17, height: 27, fill: "#c6c6c6" });
for (let q = -3; q <= 120; q++) {
  const y = Math.round(26 + q * 33.85 / 4);
  if (q === 0) continue;
  if (q % 4 === 0) add(v, "text", { transform: `translate(13 ${y}) rotate(-90)` }, q / 4);
  else if (q % 2 === 0) add(v, "rect", { x: 6, y: y, width: 6, height: 1, fill: "#444" });
  else add(v, "rect", { x: 9, y: y, width: 2, height: 1, fill: "#444" });
}
```
